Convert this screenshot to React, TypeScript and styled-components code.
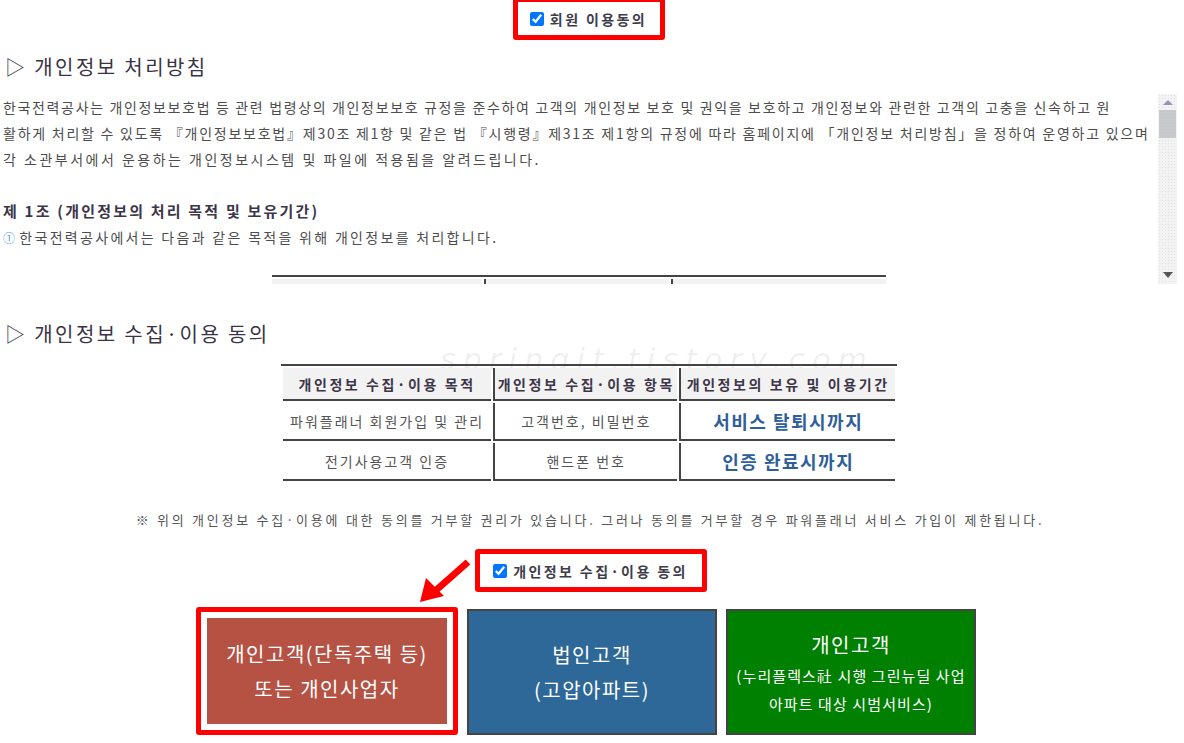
import * as React from 'react';
import styled, { createGlobalStyle } from 'styled-components';

const GlobalStyle = createGlobalStyle`
    html, body {
        margin: 0;
        padding: 0;
        background: #fff;
    }
    body {
        font-family: "Noto Sans CJK KR", "Noto Sans", sans-serif;
        color: #555;
    }
`;

const Page = styled.div`
    width: 1184px;
    display: flex;
    flex-direction: column;
    align-items: stretch;
`;

const AgreeRow = styled.div<{ top: number }>`
    position: relative;
    display: flex;
    justify-content: center;
    margin-top: ${p => p.top}px;
`;

const AgreeBox = styled.label<{ w: number; h: number; shift?: number }>`
    box-sizing: border-box;
    width: ${p => p.w}px;
    height: ${p => p.h}px;
    margin-left: ${p => p.shift || 0}px;
    border: 5px solid #ff0000;
    border-radius: 3px;
    display: flex;
    align-items: center;
    justify-content: center;
    gap: 4px;
    font-size: 14px;
    font-weight: bold;
    letter-spacing: 2.4px;
    color: #3d3d4a;
    white-space: nowrap;
    input {
        width: 14px;
        height: 14px;
        margin: 0 2px 0 0;
        accent-color: #0075ff;
    }
`;

const Heading = styled.h2<{ top: number }>`
    margin: ${p => p.top}px 0 0 5px;
    font-size: 20px;
    line-height: 30px;
    font-weight: normal;
    letter-spacing: 2.4px;
    color: #3a3344;
    white-space: nowrap;
`;

const ScrollBox = styled.div`
    margin-top: 12px;
    height: 190px;
    width: 1177px;
    display: flex;
    overflow: hidden;
`;

const ScrollContent = styled.div`
    flex: 1;
    overflow: hidden;
    padding-left: 3px;
`;

const Para = styled.p<{ spacing?: number }>`
    margin: 0;
    font-size: 14px;
    line-height: 26px;
    letter-spacing: ${p => p.spacing || 1.65}px;
    white-space: nowrap;
    color: #4d4d4d;
`;

const ArticleTitle = styled.p`
    margin: 26px 0 0;
    font-size: 15px;
    line-height: 26px;
    font-weight: bold;
    letter-spacing: 2.2px;
    color: #3d3548;
    white-space: nowrap;
`;

const Circled = styled.span`
    color: #5a9bd4;
    font-size: 12px;
    margin-right: 2px;
`;

const CutTable = styled.div`
    margin: 24px 0 0 269px;
    width: 614px;
    border-top: 2px solid #444;
    display: grid;
    grid-template-columns: 210px 185px 215px;
    column-gap: 2px;
    padding-top: 2px;
    div {
        height: 20px;
        background: #f2f2f2;
    }
    div + div {
        border-left: 2px solid #444;
    }
`;

const Scrollbar = styled.div`
    width: 19px;
    flex-shrink: 0;
    display: flex;
    flex-direction: column;
    align-items: center;
    background-color: #f3f3f3;
    background-image: radial-gradient(#e2e2e2 0.7px, transparent 0.8px);
    background-size: 3px 3px;
`;

const Arrow = styled.div<{ up?: boolean }>`
    width: 0;
    height: 0;
    margin: ${p => (p.up ? '6px 0 5px' : 'auto 0 6px')};
    border-left: 5px solid transparent;
    border-right: 5px solid transparent;
    ${p => (p.up ? 'border-bottom: 5px solid #9a90b8;' : 'border-top: 6px solid #555;')}
`;

const Thumb = styled.div`
    width: 17px;
    height: 28px;
    background-color: #c9c9c9;
    background-image: radial-gradient(#b3c8dc 0.8px, transparent 0.9px);
    background-size: 3px 3px;
`;

const Section = styled.div`
    position: relative;
    display: flex;
    flex-direction: column;
`;

const Watermark = styled.div`
    position: absolute;
    left: 440px;
    top: 58px;
    font-family: "DejaVu Sans", sans-serif;
    font-style: italic;
    font-size: 30px;
    letter-spacing: 7.2px;
    color: rgba(0, 0, 0, 0.07);
    white-space: nowrap;
    pointer-events: none;
`;

const Table = styled.table`
    margin: 15px auto 0;
    transform: translateX(-3px);
    border-collapse: separate;
    border-spacing: 2px 2px;
    border-top: 2px solid #444;
    width: 616px;
`;

const Th = styled.th<{ w: number }>`
    width: ${p => p.w}px;
    height: 31px;
    padding: 0;
    background: #f2f2f2;
    font-size: 14px;
    font-weight: bold;
    letter-spacing: 2.6px;
    color: #3d3548;
    text-align: center;
    white-space: nowrap;
    border-bottom: 2px solid #444;
    & + & {
        border-left: 2px solid #444;
    }
`;

const Td = styled.td<{ strong?: boolean }>`
    height: 36px;
    padding: 0;
    text-align: center;
    white-space: nowrap;
    font-size: ${p => (p.strong ? '18px' : '14px')};
    font-weight: ${p => (p.strong ? 'bold' : 'normal')};
    letter-spacing: ${p => (p.strong ? '1.5px' : '2px')};
    color: ${p => (p.strong ? '#2f5f99' : '#555')};
    border-bottom: 2px solid #444;
    & + & {
        border-left: 2px solid #444;
    }
`;

const Note = styled.p`
    margin: 27px 0 0;
    font-size: 13px;
    line-height: 20px;
    letter-spacing: 2.75px;
    text-align: center;
    color: #555;
    white-space: nowrap;
    padding-right: 4px;
`;

const PointArrow = styled.svg`
    position: absolute;
    left: 418px;
    top: 9px;
`;

const ButtonRow = styled.div`
    margin-top: 15px;
    display: flex;
    justify-content: center;
    align-items: flex-start;
    gap: 9px;
    padding-right: 12px;
`;

const Selected = styled.div`
    box-sizing: border-box;
    width: 262px;
    height: 128px;
    border: 5px solid #ff0000;
    border-radius: 3px;
    padding: 6px;
    background: #fff;
    display: flex;
`;

const CustomerButton = styled.div<{ bg: string; bordered?: boolean }>`
    box-sizing: border-box;
    flex: ${p => (p.bordered ? '0 0 auto' : '1')};
    width: ${p => (p.bordered ? '250px' : 'auto')};
    height: ${p => (p.bordered ? '126px' : 'auto')};
    margin-top: ${p => (p.bordered ? '2px' : '0')};
    border: ${p => (p.bordered ? '2px solid #444' : 'none')};
    background: ${p => p.bg};
    color: #fff;
    display: flex;
    flex-direction: column;
    align-items: center;
    justify-content: center;
    text-align: center;
    white-space: nowrap;
`;

const BtnLine = styled.span<{ small?: boolean }>`
    font-size: ${p => (p.small ? '15px' : '20px')};
    line-height: ${p => (p.small ? '28px' : '35px')};
    letter-spacing: ${p => (p.small ? '1.1px' : '1.5px')};
`;

const App = () => {
    return (
        <Page>
            <GlobalStyle />
            <AgreeRow top={-3}>
                <AgreeBox w={152} h={43} shift={-7}>
                    <input type="checkbox" defaultChecked />
                    회원 이용동의
                </AgreeBox>
            </AgreeRow>

            <Heading top={12}>▷ 개인정보 처리방침</Heading>

            <ScrollBox>
                <ScrollContent>
                    <Para>한국전력공사는 개인정보보호법 등 관련 법령상의 개인정보보호 규정을 준수하여 고객의 개인정보 보호 및 권익을 보호하고 개인정보와 관련한 고객의 고충을 신속하고 원</Para>
                    <Para spacing={1.75}>활하게 처리할 수 있도록 『개인정보보호법』제30조 제1항 및 같은 법 『시행령』제31조 제1항의 규정에 따라 홈페이지에 「개인정보 처리방침」을 정하여 운영하고 있으며</Para>
                    <Para spacing={2.5}>각 소관부서에서 운용하는 개인정보시스템 및 파일에 적용됨을 알려드립니다.</Para>
                    <ArticleTitle>제 1조 (개인정보의 처리 목적 및 보유기간)</ArticleTitle>
                    <Para spacing={2.3}><Circled>①</Circled>한국전력공사에서는 다음과 같은 목적을 위해 개인정보를 처리합니다.</Para>
                    <CutTable>
                        <div />
                        <div />
                        <div />
                    </CutTable>
                </ScrollContent>
                <Scrollbar>
                    <Arrow up />
                    <Thumb />
                    <Arrow />
                </Scrollbar>
            </ScrollBox>

            <Section>
                <Heading top={35}>▷ 개인정보 수집·이용 동의</Heading>
                <Watermark>springit.tistory.com</Watermark>
                <Table>
                    <thead>
                        <tr>
                            <Th w={210}>개인정보 수집·이용 목적</Th>
                            <Th w={183}>개인정보 수집·이용 항목</Th>
                            <Th w={215}>개인정보의 보유 및 이용기간</Th>
                        </tr>
                    </thead>
                    <tbody>
                        <tr>
                            <Td>파워플래너 회원가입 및 관리</Td>
                            <Td>고객번호, 비밀번호</Td>
                            <Td strong>서비스 탈퇴시까지</Td>
                        </tr>
                        <tr>
                            <Td>전기사용고객 인증</Td>
                            <Td>핸드폰 번호</Td>
                            <Td strong>인증 완료시까지</Td>
                        </tr>
                    </tbody>
                </Table>
            </Section>

            <Note>※ 위의 개인정보 수집·이용에 대한 동의를 거부할 권리가 있습니다. 그러나 동의를 거부할 경우 파워플래너 서비스 가입이 제한됩니다.</Note>

            <AgreeRow top={19}>
                <PointArrow width="56" height="46" viewBox="0 0 56 46">
                    <line x1="50" y1="4" x2="16" y2="34" stroke="#ff0000" strokeWidth="7" />
                    <polygon points="2,44 8,20 26,38" fill="#ff0000" />
                </PointArrow>
                <AgreeBox w={232} h={43} shift={-3}>
                    <input type="checkbox" defaultChecked />
                    개인정보 수집·이용 동의
                </AgreeBox>
            </AgreeRow>

            <ButtonRow>
                <Selected>
                    <CustomerButton bg="#b55244">
                        <BtnLine>개인고객(단독주택 등)</BtnLine>
                        <BtnLine>또는 개인사업자</BtnLine>
                    </CustomerButton>
                </Selected>
                <CustomerButton bg="#2e6898" bordered>
                    <BtnLine>법인고객</BtnLine>
                    <BtnLine>(고압아파트)</BtnLine>
                </CustomerButton>
                <CustomerButton bg="#008000" bordered>
                    <BtnLine>개인고객</BtnLine>
                    <BtnLine small>(누리플렉스社 시행 그린뉴딜 사업</BtnLine>
                    <BtnLine small>아파트 대상 시범서비스)</BtnLine>
                </CustomerButton>
            </ButtonRow>
        </Page>
    );
};

export default App;
